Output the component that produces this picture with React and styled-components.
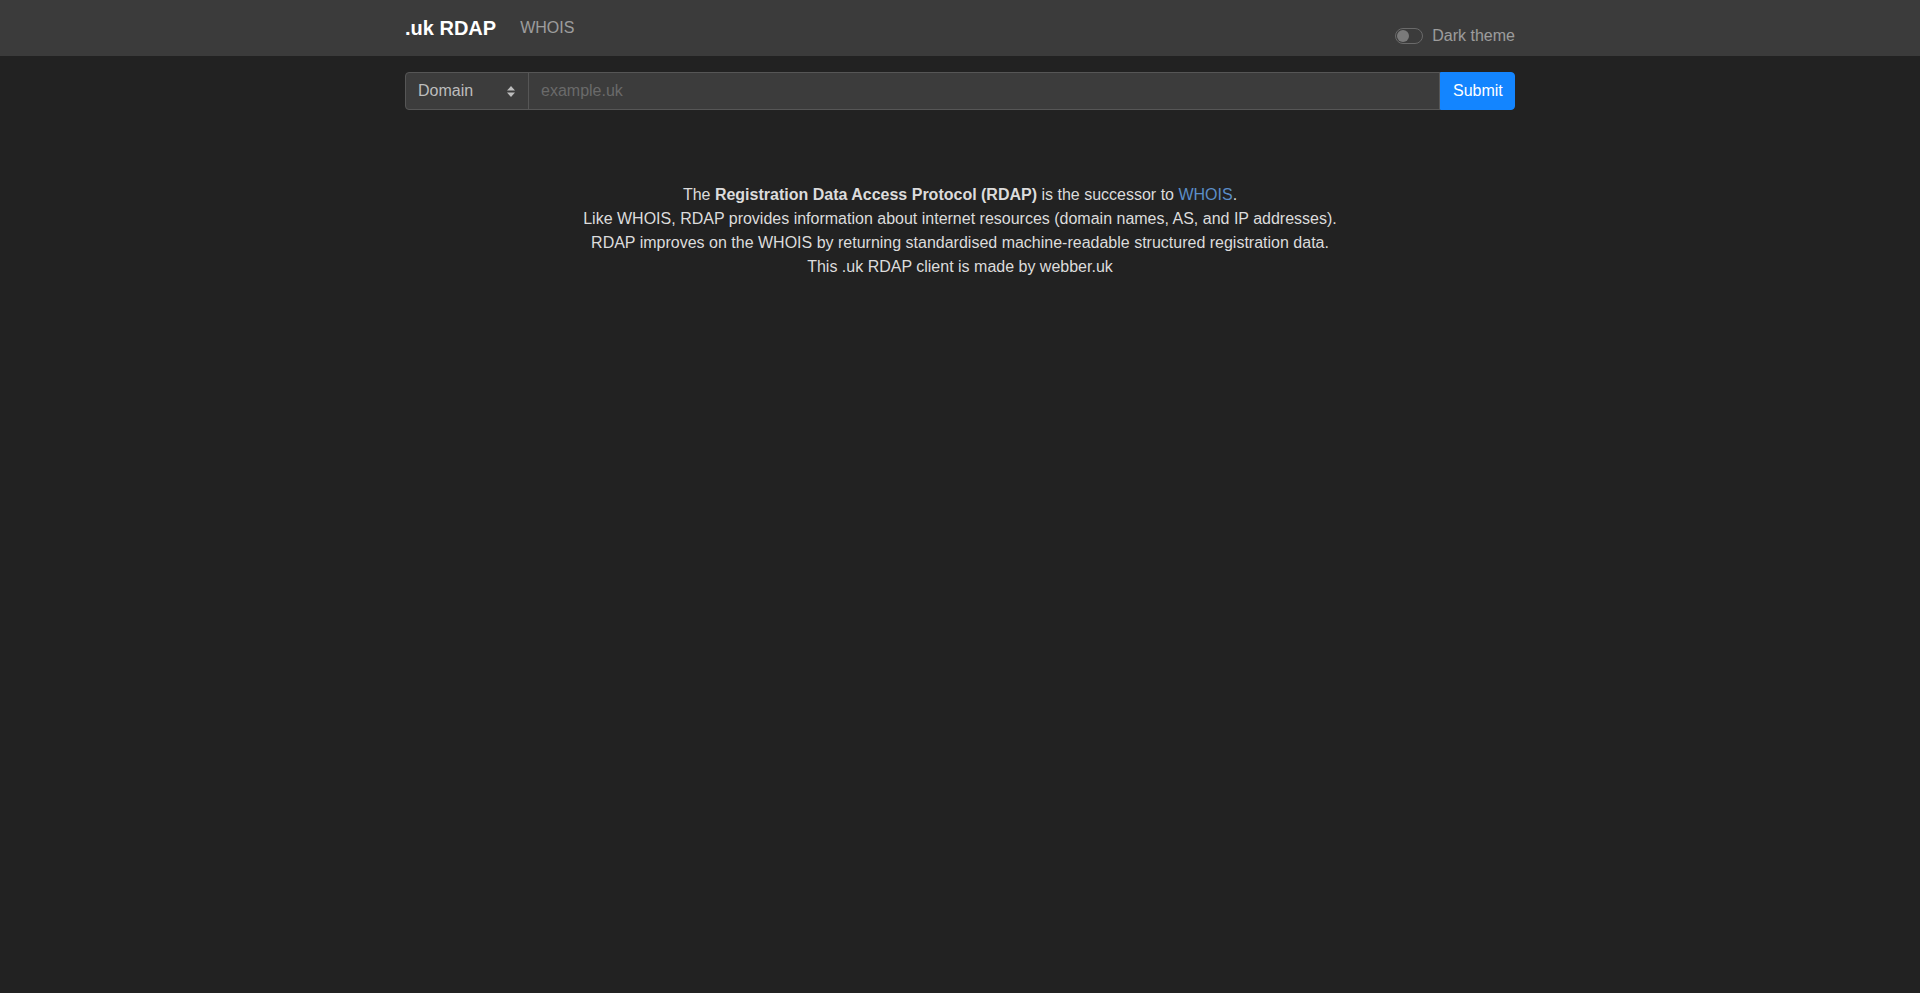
import React from "react";
import styled, { createGlobalStyle } from "styled-components";

const Global = createGlobalStyle`
  html, body {
    margin: 0;
    padding: 0;
    background: #222222;
    font-family: "Liberation Sans", Arial, Helvetica, sans-serif;
    font-size: 16px;
    line-height: 1.5;
    color: #dcdcdc;
  }
  * { box-sizing: border-box; }
`;

const Page = styled.div`
  min-height: 993px;
  background: #222222;
`;

const Navbar = styled.nav`
  background: #3b3b3b;
  height: 56px;
  padding: 8px 0;
`;

const Container = styled.div`
  width: 1140px;
  margin: 0 auto;
  padding: 0 15px;
`;

const NavInner = styled(Container)`
  display: flex;
  align-items: flex-start;
  justify-content: space-between;
  height: 40px;
`;

const NavLeft = styled.div`
  display: flex;
  align-items: center;
`;

const Brand = styled.a`
  font-size: 20px;
  font-weight: 700;
  line-height: 30px;
  padding: 5px 0;
  margin-right: 16px;
  color: #ffffff;
  text-decoration: none;
`;

const NavLink = styled.a`
  display: block;
  padding: 8px;
  font-size: 16px;
  line-height: 24px;
  color: rgba(255, 255, 255, 0.5);
  text-decoration: none;
`;

const SwitchWrap = styled.label`
  display: flex;
  align-items: center;
  margin-top: 16px;
  height: 24px;
  color: rgba(255, 255, 255, 0.5);
  font-size: 16px;
  line-height: 24px;
  cursor: pointer;
`;

const Track = styled.span`
  position: relative;
  width: 28px;
  height: 16px;
  border: 1px solid #6a6a6a;
  border-radius: 8px;
  background: #3b3b3b;
  margin-right: 9px;
  &::after {
    content: "";
    position: absolute;
    top: 1px;
    left: 1px;
    width: 12px;
    height: 12px;
    border-radius: 50%;
    background: #7a7a7a;
  }
`;

const Main = styled(Container)`
  padding-top: 16px;
`;

const InputGroup = styled.form`
  display: flex;
  height: 38px;
`;

const SelectBox = styled.div`
  width: 124px;
  height: 38px;
  padding: 6px 12px;
  background: #3c3c3c;
  border: 1px solid #565656;
  border-radius: 4px 0 0 4px;
  color: #bdbdbd;
  font-size: 16px;
  line-height: 24px;
  display: flex;
  align-items: center;
  justify-content: space-between;
`;

const Arrows = styled.svg`
  width: 8px;
  height: 11px;
  margin-right: 1px;
`;

const TextInput = styled.input`
  flex: 1;
  height: 38px;
  margin-left: -1px;
  padding: 6px 12px;
  background: #3c3c3c;
  border: 1px solid #565656;
  border-radius: 0;
  color: #dcdcdc;
  font-family: inherit;
  font-size: 16px;
  line-height: 24px;
  outline: none;
  &::placeholder {
    color: #6a6a6a;
  }
`;

const Button = styled.button`
  height: 38px;
  width: 75px;
  padding: 6px 12px;
  background: #1385ff;
  border: 1px solid #1385ff;
  border-radius: 0 4px 4px 0;
  color: #ffffff;
  font-family: inherit;
  font-size: 16px;
  line-height: 24px;
  cursor: pointer;
`;

const Intro = styled.div`
  margin-top: 73px;
  text-align: center;
  color: #dcdcdc;
  font-size: 16px;
  line-height: 24px;
`;

const Line = styled.p`
  margin: 0;
`;

const Link = styled.a`
  color: #5b8ec8;
  text-decoration: none;
`;

export default function App() {
  return (
    <Page>
      <Global />
      <Navbar>
        <NavInner>
          <NavLeft>
            <Brand href="#">.uk RDAP</Brand>
            <NavLink href="#">WHOIS</NavLink>
          </NavLeft>
          <SwitchWrap>
            <Track />
            Dark theme
          </SwitchWrap>
        </NavInner>
      </Navbar>
      <Main>
        <InputGroup onSubmit={(e) => e.preventDefault()}>
          <SelectBox>
            <span>Domain</span>
            <Arrows viewBox="0 0 8 11">
              <path d="M4 0 L8 4.5 H0 Z M4 11 L0 6.5 H8 Z" fill="#bdbdbd" />
            </Arrows>
          </SelectBox>
          <TextInput placeholder="example.uk" />
          <Button type="submit">Submit</Button>
        </InputGroup>
        <Intro>
          <Line>
            The <b>Registration Data Access Protocol (RDAP)</b> is the successor to{" "}
            <Link href="#">WHOIS</Link>.
          </Line>
          <Line>
            Like WHOIS, RDAP provides information about internet resources (domain names, AS, and IP addresses).
          </Line>
          <Line>
            RDAP improves on the WHOIS by returning standardised machine-readable structured registration data.
          </Line>
          <Line>This .uk RDAP client is made by webber.uk</Line>
        </Intro>
      </Main>
    </Page>
  );
}
